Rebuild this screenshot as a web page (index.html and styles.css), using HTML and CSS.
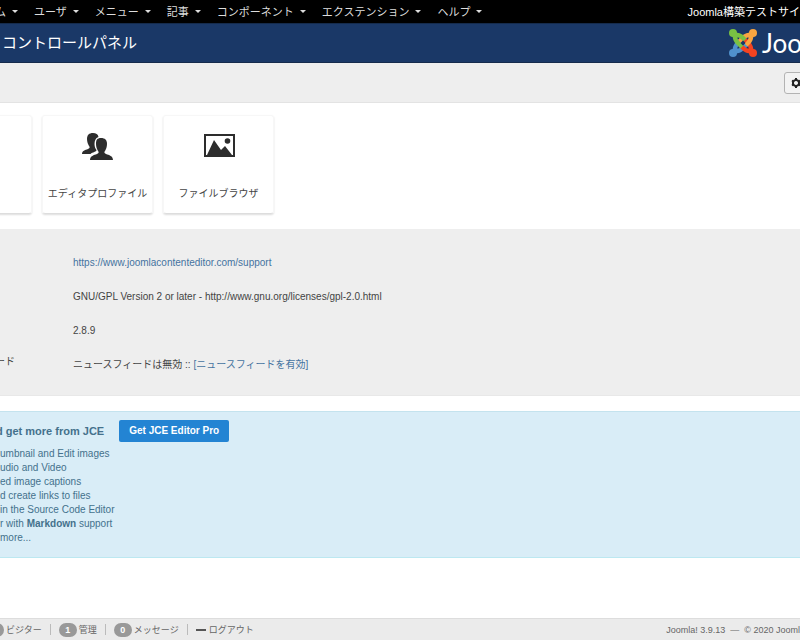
FILE: index.html
```html
<!DOCTYPE html>
<html lang="ja">
<head>
<meta charset="utf-8">
<title>コントロールパネル</title>
<link rel="stylesheet" href="styles.css">
</head>
<body>
<nav class="menubar">
  <ul class="menu">
    <li><a href="#">ム</a></li>
    <li><a href="#">ユーザ</a></li>
    <li><a href="#">メニュー</a></li>
    <li><a href="#">記事</a></li>
    <li><a href="#">コンポーネント</a></li>
    <li><a href="#">エクステンション</a></li>
    <li><a href="#">ヘルプ</a></li>
  </ul>
  <a class="site" href="#">Joomla構築テストサイ</a>
</nav>
<header class="header">
  <h1>コントロールパネル</h1>
  <div class="brand">
    <svg class="logo" viewBox="0 0 28 28" fill="none" stroke-width="4.400" stroke-linejoin="round">
      <path stroke="#5091cd" d="M4 24L6 20Q6 17 9 14L14 9M4 24L8 22Q11 22 14 19L18 15"/>
      <path stroke="#f44321" d="M24 24L20 22Q17 22 14 19L12 17M24 24L22 20Q22 17 19 14L14 9"/>
      <path stroke="#f9a541" d="M24 4L22 8Q22 11 19 14L17 16M24 4L20 6Q17 6 14 9L9 14"/>
      <path stroke="#7ac143" d="M4 4L8 6Q11 6 14 9L16 11M4 4L6 8Q6 11 9 14L13 18"/>
      <g stroke="none">
        <circle cx="4" cy="4" r="4" fill="#7ac143"/>
        <circle cx="24" cy="4" r="4" fill="#f9a541"/>
        <circle cx="4" cy="24" r="4" fill="#5091cd"/>
        <circle cx="24" cy="24" r="4" fill="#f44321"/>
        <path fill="#1a3867" d="M14 11.500l2.500 2.500-2.500 2.500-2.500-2.500z"/>
      </g>
    </svg>
    <span class="wordmark">Joo</span>
  </div>
</header>
<div class="toolbar">
  <button class="options" type="button" aria-label="オプション">
    <svg viewBox="0 0 10 10"><path fill="none" stroke="#222" stroke-width="2" d="M5 2a3 3 0 1 0 .01 0z"/><path stroke="#222" stroke-width="2" d="M5 0v2M5 8v2M1 2.500l1.500 1M7.500 6.500l1.500 1M1 7.500l1.500-1M7.500 3.500l1.500-1"/></svg>
  </button>
</div>
<main>
  <div class="cards">
    <a class="card card-cut" href="#" aria-label="設定"></a>
    <a class="card" href="#">
      <svg viewBox="0 0 32 28" fill="#2d2d2d"><path d="M0 22c0-3 3-4 6-5 2-1 2-2 1-3-1-2-2-4-2-7 0-4 2-6 6-6 3 0 5 1 5.500 4-3 1-4 4-4 7 0 3 1 5 2 6 0 2-4 2-6 4z"/><path d="M8 28c0-4 4-5 7-6 2-1 2-2 1-3-1-2-2-4-2-7 0-4 1-6 5-6s6 2 6 6c0 3-1 5-2 7-1 1-1 2 1 3 3 1 7 2 7 6z"/></svg>
      <span>エディタプロファイル</span>
    </a>
    <a class="card" href="#">
      <svg viewBox="0 0 32 28"><path fill="none" stroke="#2d2d2d" stroke-width="2" d="M2 3h29v21H2z"/><g fill="#2d2d2d"><path d="M4 23l7-15 7 10 4-4 7 9z"/><circle cx="24.500" cy="9" r="2.800"/></g></svg>
      <span>ファイルブラウザ</span>
    </a>
  </div>
  <dl class="info">
    <dt></dt><dd><a href="#">https://www.joomlacontenteditor.com/support</a></dd>
    <dt></dt><dd>GNU/GPL Version 2 or later - http://www.gnu.org/licenses/gpl-2.0.html</dd>
    <dt></dt><dd>2.8.9</dd>
    <dt>ード</dt><dd>ニュースフィードは無効 :: <a href="#">[ニュースフィードを有効]</a></dd>
  </dl>
  <section class="promo">
    <div class="promo-head">
      <h2>d get more from JCE</h2>
      <a class="pro" href="#">Get JCE Editor Pro</a>
    </div>
    <ul>
      <li>umbnail and Edit images</li>
      <li>udio and Video</li>
      <li>ed image captions</li>
      <li>d create links to files</li>
      <li>in the Source Code Editor</li>
      <li>r with <strong>Markdown</strong> support</li>
      <li>more...</li>
    </ul>
  </section>
</main>
<footer class="status">
  <ul>
    <li><span class="badge"></span>ビジター</li>
    <li><span class="badge">1</span>管理</li>
    <li><span class="badge">0</span>メッセージ</li>
    <li><a href="#"><i class="dash"></i>ログアウト</a></li>
  </ul>
  <p>Joomla! 3.9.13 &nbsp;—&nbsp; © 2020 Jooml</p>
</footer>
</body>
</html>
```
FILE: styles.css
```css
* { box-sizing: border-box; }
body {
  margin: 0;
  min-height: 100vh;
  display: flex;
  flex-direction: column;
  overflow-x: hidden;
  background: #fff;
  color: #444;
  font: 10px/14px "Liberation Sans", "Noto Sans CJK JP", sans-serif;
}
ul, dl, dd, h1, h2, p { margin: 0; padding: 0; }
ul { list-style: none; }
a { color: #4573a0; text-decoration: none; }

.menubar {
  display: flex;
  justify-content: space-between;
  align-items: center;
  height: 23px;
  background: #000;
  font-size: 11px;
  white-space: nowrap;
  overflow: hidden;
}
.menu { display: flex; gap: 16px; margin-left: -5px; }
.menubar a { color: #ddd; }
.menu a { display: flex; align-items: center; gap: 6px; }
.menu a::after {
  content: "";
  border: 3px solid transparent;
  border-top-color: #ddd;
  border-bottom: 0;
}
.menubar .site { color: #fff; }

.header {
  display: flex;
  justify-content: space-between;
  align-items: center;
  height: 40px;
  padding-left: 2px;
  background: #1a3867;
  border-top: 1px solid #152b4c;
  border-bottom: 1px solid #152b4c;
  color: #fff;
  overflow: hidden;
}
.header h1 { font-size: 15px; font-weight: 400; line-height: 20px; }
.brand { display: flex; align-items: center; gap: 5px; margin-right: -2px; }
.logo { width: 28px; height: 28px; }
.wordmark { font: 26px/30px Lato, sans-serif; }

.toolbar {
  display: flex;
  justify-content: flex-end;
  align-items: center;
  height: 40px;
  background: #eee;
  border-bottom: 1px solid #e3e3e3;
  overflow: hidden;
}
.options {
  width: 72px;
  height: 22px;
  margin-right: -56px;
  padding: 0 6px;
  display: flex;
  align-items: center;
  background: #f3f3f3;
  border: 1px solid #b3b3b3;
  border-radius: 3px;
}
.options svg { width: 10px; height: 10px; }

.cards { display: flex; gap: 10px; padding: 12px 0 15px; overflow: hidden; }
.card {
  width: 111px;
  height: 99px;
  display: flex;
  flex-direction: column;
  align-items: center;
  justify-content: space-between;
  padding: 16px 0 12px;
  border: 1px solid #f7f7f7;
  border-bottom-color: #ddd;
  border-radius: 3px;
  box-shadow: 0 1px 2px #ddd;
  color: #444;
  white-space: nowrap;
}
.card-cut { margin-left: -79px; }
.card svg { width: 32px; height: 28px; }

.info {
  display: grid;
  grid-template-columns: 78px 1fr;
  row-gap: 20px;
  padding: 27px 0 23px;
  background: #eee;
  border-bottom: 1px solid #e8e8e8;
}
.info dt { margin: -3px 0 0 -5px; }
.info dd { margin-left: -5px; }

.promo {
  margin-top: 15px;
  padding: 8px 0 12px;
  background: #d9edf7;
  border-top: 1px solid #c4e3ee;
  border-bottom: 1px solid #bce8f1;
  color: #44718c;
  overflow: hidden;
}
.promo-head { display: flex; align-items: center; gap: 15px; margin: 0 0 5px -4px; }
.promo h2 { font-size: 11px; line-height: 14px; }
.pro {
  padding: 4px 10px;
  background: #2384d3;
  border-radius: 2px;
  color: #fff;
  font-weight: 700;
}

.status {
  display: flex;
  justify-content: space-between;
  align-items: center;
  height: 22px;
  margin-top: auto;
  background: #ebebeb;
  border-top: 1px solid #ddd;
  color: #666;
  font-size: 9px;
  white-space: nowrap;
  overflow: hidden;
}
.status ul { display: flex; margin-left: -14px; }
.status li { display: flex; align-items: center; }
.status li + li::before { content: ""; height: 11px; margin: 0 8px; border-left: 1px solid #bbb; }
.status a { color: #666; display: flex; align-items: center; gap: 3px; }
.badge {
  width: 18px;
  height: 14px;
  margin-right: 2px;
  border-radius: 7px;
  background: #999;
  color: #fff;
  font-weight: 700;
  text-align: center;
}
.dash { width: 10px; height: 2px; background: #555; }
```
